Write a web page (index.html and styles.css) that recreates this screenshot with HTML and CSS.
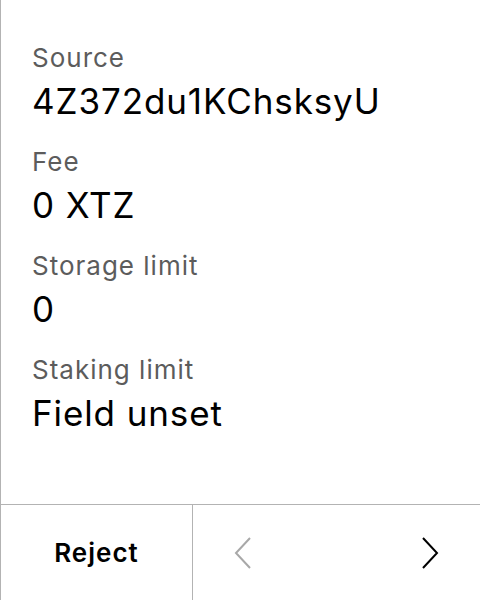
FILE: index.html
```html
<!DOCTYPE html>
<html>
<head>
<meta charset="utf-8">
<link rel="stylesheet" href="styles.css">
</head>
<body>
<div class="screen">
  <div class="content">
    <div class="field">
      <div class="label">Source</div>
      <div class="value">4Z372du1KChsksyU</div>
    </div>
    <div class="field">
      <div class="label">Fee</div>
      <div class="value">0 XTZ</div>
    </div>
    <div class="field">
      <div class="label">Storage limit</div>
      <div class="value">0</div>
    </div>
    <div class="field">
      <div class="label">Staking limit</div>
      <div class="value">Field unset</div>
    </div>
  </div>
  <div class="footer">
    <div class="reject">Reject</div>
    <div class="nav">
      <svg class="chev" width="18" height="32" viewBox="0 0 18 32"><path d="M16 1 L2 16 L16 31" fill="none" stroke="#a8a8a8" stroke-width="2"/></svg>
      <svg class="chev" width="18" height="32" viewBox="0 0 18 32"><path d="M2 1 L16 16 L2 31" fill="none" stroke="#000" stroke-width="2"/></svg>
    </div>
  </div>
</div>
</body>
</html>
```
FILE: styles.css
```css
html, body {
  margin: 0;
  padding: 0;
  background: #fff;
}
body {
  font-family: Inter, "Noto Sans", sans-serif;
  color: #000;
}
.screen {
  width: 480px;
  height: 600px;
  box-sizing: border-box;
  border-left: 1px solid #b3b3b3;
  display: flex;
  flex-direction: column;
}
.content {
  flex: 1;
  padding: 42px 0 0 31px;
  display: flex;
  flex-direction: column;
  gap: 25px;
}
.label {
  font-size: 26px;
  line-height: 32px;
  letter-spacing: 1px;
  color: #5c5c5c;
}
.value {
  font-size: 35px;
  line-height: 40px;
  letter-spacing: 0.9px;
  margin-top: 7px;
}
.footer {
  height: 96px;
  box-sizing: border-box;
  border-top: 1px solid #b3b3b3;
  display: flex;
}
.reject {
  width: 191px;
  border-right: 1px solid #b3b3b3;
  display: flex;
  align-items: center;
  justify-content: center;
  font-size: 26px;
  font-weight: 600;
  letter-spacing: 1px;
}
.nav {
  flex: 1;
  display: flex;
  align-items: center;
  justify-content: space-between;
  padding: 0 41px 0 41px;
}
.chev {
  display: block;
}
```
